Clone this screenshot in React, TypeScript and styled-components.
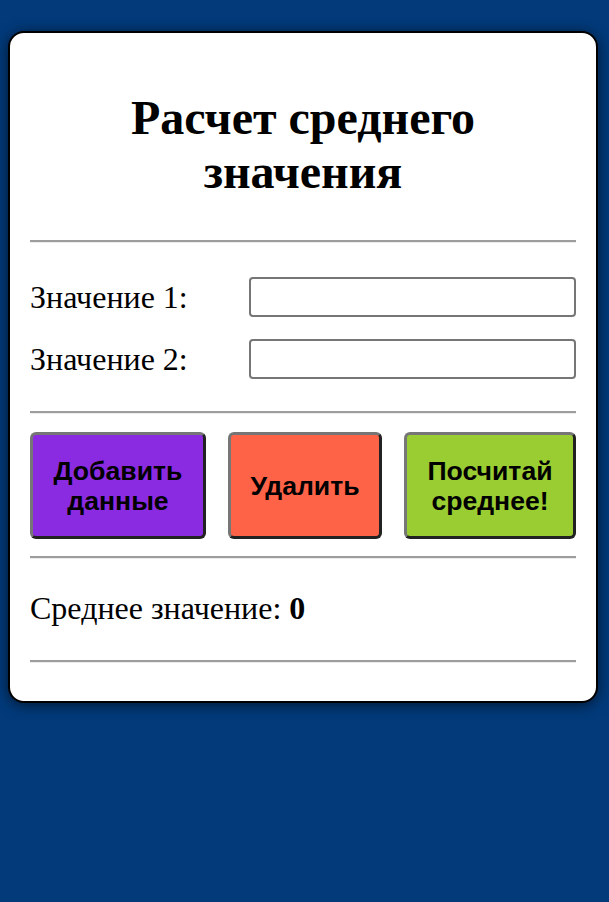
import React from "react";
import styled, { createGlobalStyle } from "styled-components";

const Global = createGlobalStyle`
  html, body { margin: 0; padding: 0; background: #023a7a; }
  body { font-family: "Liberation Serif", "Times New Roman", serif; }
  * { box-sizing: border-box; }
`;

const Page = styled.div`
  min-height: 902px;
  padding: 31px 11px 0 8px;
`;

const Card = styled.div`
  width: 590px;
  background: #ffffff;
  border: 2px solid #000;
  border-radius: 16px;
  box-shadow: 0 2px 14px rgba(0, 0, 0, 0.6);
  padding: 58px 20px 38px;
`;

const Title = styled.h1`
  margin: 0 0 41px;
  font-size: 48px;
  line-height: 54px;
  font-weight: bold;
  text-align: center;
  color: #000;
`;

const Rule = styled.hr<{ $after: number }>`
  margin: 0 0 ${(p) => p.$after}px;
  border: 0;
  border-top: 2px solid #9d9d9d;
  border-bottom: 1px solid #ececec;
  height: 0;
`;

const Fields = styled.div`
  display: flex;
  flex-direction: column;
  gap: 22px;
  margin-bottom: 32px;
`;

const Row = styled.div`
  display: grid;
  grid-template-columns: 219px 1fr;
  align-items: center;
`;

const Label = styled.label`
  font-size: 32px;
  color: #000;
`;

const Input = styled.input`
  height: 40px;
  width: 100%;
  border: 2px solid #767676;
  border-radius: 4px;
  background: #fff;
  font-size: 20px;
`;

const Buttons = styled.div`
  display: flex;
  gap: 22px;
  margin-bottom: 17px;
`;

const Button = styled.button<{ $bg: string; $w: number }>`
  flex: 0 0 ${(p) => p.$w}px;
  height: 107px;
  padding: 0 16px;
  background: ${(p) => p.$bg};
  border: 3px solid;
  border-color: #767676 #222 #222 #767676;
  border-radius: 6px;
  font-family: "Liberation Sans", Arial, sans-serif;
  font-weight: bold;
  font-size: 26.6px;
  line-height: 30px;
  color: #000;
  text-align: center;
  cursor: pointer;
`;

const Result = styled.p`
  margin: 0 0 33px;
  padding-top: 31px;
  font-size: 32px;
  line-height: 37px;
  color: #000;
`;

export default function App() {
  return (
    <>
      <Global />
      <Page>
        <Card>
          <Title>Расчет среднего значения</Title>
          <Rule $after={34} />
          <Fields>
            <Row>
              <Label htmlFor="v1">Значение 1:</Label>
              <Input id="v1" type="text" />
            </Row>
            <Row>
              <Label htmlFor="v2">Значение 2:</Label>
              <Input id="v2" type="text" />
            </Row>
          </Fields>
          <Rule $after={18} />
          <Buttons>
            <Button $bg="#8a2be2" $w={176}>Добавить данные</Button>
            <Button $bg="#ff6347" $w={154}>Удалить</Button>
            <Button $bg="#9acd32" $w={172}>Посчитай среднее!</Button>
          </Buttons>
          <Rule $after={0} />
          <Result>
            Среднее значение: <b>0</b>
          </Result>
          <Rule $after={0} />
        </Card>
      </Page>
    </>
  );
}
